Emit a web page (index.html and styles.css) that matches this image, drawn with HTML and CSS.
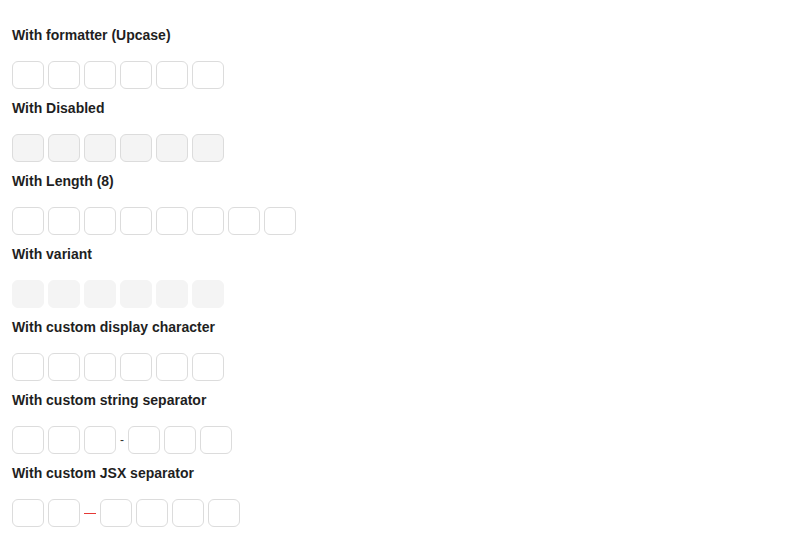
FILE: index.html
```html
<!DOCTYPE html>
<html>
<head>
<meta charset="utf-8">
<link rel="stylesheet" href="styles.css">
</head>
<body>
<div class="page">
  <section class="demo">
    <h3 class="title">With formatter (Upcase)</h3>
    <div class="pins">
      <input class="pin" maxlength="1"><input class="pin" maxlength="1"><input class="pin" maxlength="1"><input class="pin" maxlength="1"><input class="pin" maxlength="1"><input class="pin" maxlength="1">
    </div>
  </section>
  <section class="demo">
    <h3 class="title">With Disabled</h3>
    <div class="pins">
      <input class="pin" disabled><input class="pin" disabled><input class="pin" disabled><input class="pin" disabled><input class="pin" disabled><input class="pin" disabled>
    </div>
  </section>
  <section class="demo">
    <h3 class="title">With Length (8)</h3>
    <div class="pins">
      <input class="pin"><input class="pin"><input class="pin"><input class="pin"><input class="pin"><input class="pin"><input class="pin"><input class="pin">
    </div>
  </section>
  <section class="demo">
    <h3 class="title">With variant</h3>
    <div class="pins">
      <input class="pin filled"><input class="pin filled"><input class="pin filled"><input class="pin filled"><input class="pin filled"><input class="pin filled">
    </div>
  </section>
  <section class="demo">
    <h3 class="title">With custom display character</h3>
    <div class="pins">
      <input class="pin"><input class="pin"><input class="pin"><input class="pin"><input class="pin"><input class="pin">
    </div>
  </section>
  <section class="demo">
    <h3 class="title">With custom string separator</h3>
    <div class="pins">
      <input class="pin"><input class="pin"><input class="pin"><span class="sep-text">-</span><input class="pin"><input class="pin"><input class="pin">
    </div>
  </section>
  <section class="demo">
    <h3 class="title">With custom JSX separator</h3>
    <div class="pins">
      <input class="pin"><input class="pin"><span class="sep-line"></span><input class="pin"><input class="pin"><input class="pin"><input class="pin">
    </div>
  </section>
</div>
</body>
</html>
```
FILE: styles.css
```css
html, body {
  margin: 0;
  padding: 0;
  background: #ffffff;
}
.page {
  padding: 25px 12px 0 12px;
  font-family: "Liberation Sans", Arial, sans-serif;
  color: #1f1f1f;
}
.demo {
  margin-bottom: 9px;
}
.title {
  margin: 0 0 16px 0;
  font-size: 14px;
  line-height: 20px;
  font-weight: bold;
  color: #1f1f1f;
}
.pins {
  display: flex;
  align-items: center;
  gap: 4px;
  height: 28px;
}
.pin {
  box-sizing: border-box;
  width: 32px;
  height: 28px;
  margin: 0;
  padding: 0;
  border: 1px solid #dcdcdc;
  border-radius: 6px;
  background: #ffffff;
  font: 14px "Liberation Sans", Arial, sans-serif;
  text-align: center;
  outline: none;
}
.pin:disabled {
  background: #f4f4f4;
  border-color: #dcdcdc;
}
.pin.filled {
  background: #f4f4f4;
  border-color: #f4f4f4;
}
.sep-text {
  font-size: 12px;
  line-height: 28px;
  color: #333333;
}
.sep-line {
  display: block;
  width: 12px;
  height: 1px;
  background: #e53935;
}
```
